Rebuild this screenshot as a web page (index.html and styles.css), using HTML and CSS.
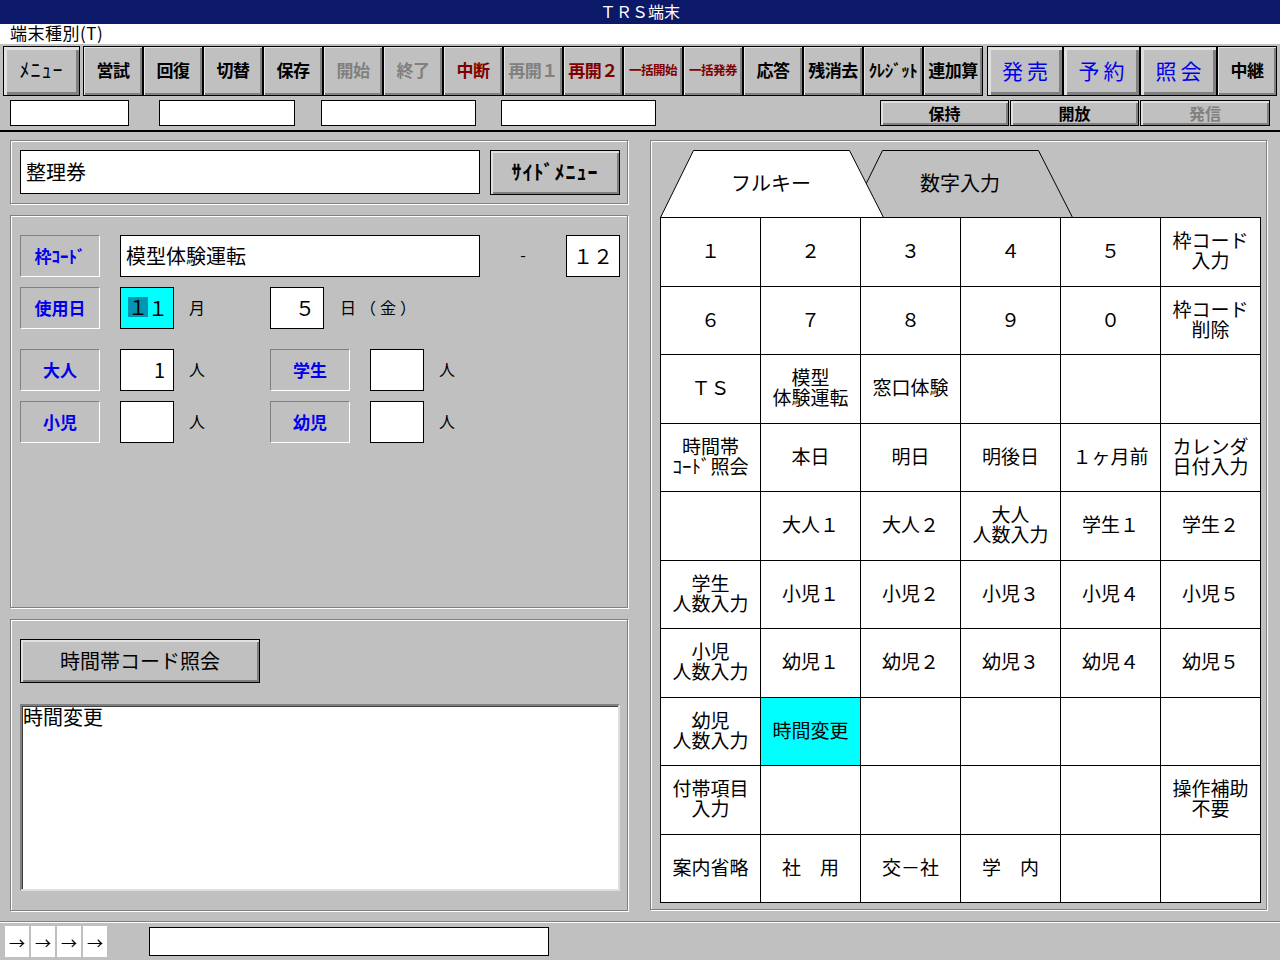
FILE: index.html
```html
<!DOCTYPE html>
<html lang="ja">
<head>
<meta charset="utf-8">
<title>ＴＲＳ端末</title>
<link rel="stylesheet" href="styles.css">
</head>
<body>
<div class="app">
  <div class="titlebar">ＴＲＳ端末</div>
  <div class="menubar"><span class="menu-item">端末種別(T)</span></div>

  <div class="toolbar">
    <div class="btn-row">
      <button class="tb big w-menu">ﾒﾆｭｰ</button>
      <button class="tb first">営試</button>
      <button class="tb">回復</button>
      <button class="tb">切替</button>
      <button class="tb">保存</button>
      <button class="tb gray">開始</button>
      <button class="tb gray">終了</button>
      <button class="tb red">中断</button>
      <button class="tb gray">再開１</button>
      <button class="tb red">再開２</button>
      <button class="tb red small">一括開始</button>
      <button class="tb red small">一括発券</button>
      <button class="tb">応答</button>
      <button class="tb">残消去</button>
      <button class="tb">ｸﾚｼﾞｯﾄ</button>
      <button class="tb">連加算</button>
      <button class="tb big blue w-hatsu">発売</button>
      <button class="tb big blue w-77">予約</button>
      <button class="tb big blue w-77">照会</button>
      <button class="tb">中継</button>
    </div>
    <div class="field-row">
      <div class="box f1"></div>
      <div class="box f2"></div>
      <div class="box f3"></div>
      <div class="box f4"></div>
      <button class="sb push">保持</button>
      <button class="sb">開放</button>
      <button class="sb gray wide">発信</button>
    </div>
  </div>
  <div class="divider"></div>

  <div class="main">
    <div class="left">
      <div class="panel p1">
        <div class="input ticket">整理券</div>
        <button class="bb side">ｻｲﾄﾞﾒﾆｭｰ</button>
      </div>

      <div class="panel p2">
        <div class="frow">
          <div class="lbl">枠ｺｰﾄﾞ</div>
          <div class="input name">模型体験運転</div>
          <div class="dash">-</div>
          <div class="input sq center">１２</div>
        </div>
        <div class="frow">
          <div class="lbl">使用日</div>
          <div class="input sq cyan"><span class="sel">１</span>１</div>
          <div class="unit">月</div>
          <div class="input sq right">５</div>
          <div class="unit date">日（金）</div>
        </div>
        <div class="frow gap-top">
          <div class="lbl">大人</div>
          <div class="input sq right">1</div>
          <div class="unit">人</div>
          <div class="lbl">学生</div>
          <div class="input sq"></div>
          <div class="unit">人</div>
        </div>
        <div class="frow">
          <div class="lbl">小児</div>
          <div class="input sq"></div>
          <div class="unit">人</div>
          <div class="lbl">幼児</div>
          <div class="input sq"></div>
          <div class="unit">人</div>
        </div>
      </div>

      <div class="panel p3">
        <button class="bb query">時間帯コード照会</button>
        <div class="memo">時間変更</div>
      </div>
    </div>

    <div class="panel right">
      <div class="tabs">
        <svg width="600" height="67" viewBox="0 0 600 67">
          <polygon points="189.5,67.5 222.5,0.5 378.5,0.5 412.5,67.5" fill="#c0c0c0" stroke="#000" stroke-width="1"/>
          <polygon points="0.5,67.5 33.5,0.5 189.5,0.5 223.5,67.5" fill="#fff" stroke="#000" stroke-width="1"/>
          <text x="111" y="32" class="tab-text">フルキー</text>
          <text x="300" y="32" class="tab-text">数字入力</text>
        </svg>
      </div>
      <div class="keys">
        <div class="key">１</div>
        <div class="key">２</div>
        <div class="key">３</div>
        <div class="key">４</div>
        <div class="key">５</div>
        <div class="key"><span class="l">枠コード</span><span class="l">入力</span></div>

        <div class="key">６</div>
        <div class="key">７</div>
        <div class="key">８</div>
        <div class="key">９</div>
        <div class="key">０</div>
        <div class="key"><span class="l">枠コード</span><span class="l">削除</span></div>

        <div class="key">ＴＳ</div>
        <div class="key"><span class="l">模型</span><span class="l">体験運転</span></div>
        <div class="key">窓口体験</div>
        <div class="key"></div>
        <div class="key"></div>
        <div class="key"></div>

        <div class="key"><span class="l">時間帯</span><span class="l">ｺｰﾄﾞ照会</span></div>
        <div class="key">本日</div>
        <div class="key">明日</div>
        <div class="key">明後日</div>
        <div class="key">１ヶ月前</div>
        <div class="key"><span class="l">カレンダ</span><span class="l">日付入力</span></div>

        <div class="key"></div>
        <div class="key">大人１</div>
        <div class="key">大人２</div>
        <div class="key"><span class="l">大人</span><span class="l">人数入力</span></div>
        <div class="key">学生１</div>
        <div class="key">学生２</div>

        <div class="key"><span class="l">学生</span><span class="l">人数入力</span></div>
        <div class="key">小児１</div>
        <div class="key">小児２</div>
        <div class="key">小児３</div>
        <div class="key">小児４</div>
        <div class="key">小児５</div>

        <div class="key"><span class="l">小児</span><span class="l">人数入力</span></div>
        <div class="key">幼児１</div>
        <div class="key">幼児２</div>
        <div class="key">幼児３</div>
        <div class="key">幼児４</div>
        <div class="key">幼児５</div>

        <div class="key"><span class="l">幼児</span><span class="l">人数入力</span></div>
        <div class="key active">時間変更</div>
        <div class="key"></div>
        <div class="key"></div>
        <div class="key"></div>
        <div class="key"></div>

        <div class="key"><span class="l">付帯項目</span><span class="l">入力</span></div>
        <div class="key"></div>
        <div class="key"></div>
        <div class="key"></div>
        <div class="key"></div>
        <div class="key"><span class="l">操作補助</span><span class="l">不要</span></div>

        <div class="key">案内省略</div>
        <div class="key">社　用</div>
        <div class="key">交－社</div>
        <div class="key">学　内</div>
        <div class="key"></div>
        <div class="key"></div>
      </div>
    </div>
  </div>

  <div class="status">
    <div class="arrow">→</div>
    <div class="arrow">→</div>
    <div class="arrow">→</div>
    <div class="arrow">→</div>
    <div class="box status-input"></div>
  </div>
</div>
</body>
</html>
```

FILE: styles.css
```css
* { box-sizing: border-box; }

html, body {
  margin: 0;
  padding: 0;
}

body {
  width: 1280px;
  height: 960px;
  overflow: hidden;
  background: #c0c0c0;
  font-family: "Noto Sans CJK JP", "Noto Sans CJK SC", sans-serif;
  color: #000;
}

button {
  font-family: inherit;
  margin: 0;
  padding: 0;
  cursor: default;
}

.app {
  display: flex;
  flex-direction: column;
  height: 960px;
}

/* title + menu */
.titlebar {
  height: 24px;
  background: #0c1968;
  color: #fff;
  font-size: 16px;
  line-height: 22px;
  text-align: center;
}

.menubar {
  height: 20px;
  background: #fff;
  font-size: 17px;
  line-height: 18px;
  padding-left: 10px;
  letter-spacing: 0.5px;
}

/* toolbar */
.toolbar {
  padding-top: 2px;
  height: 86px;
}

.btn-row {
  display: flex;
  height: 50px;
  padding-left: 3px;
}

.tb {
  width: 60px;
  height: 50px;
  border: 1px solid #000;
  background: #c0c0c0;
  box-shadow: inset 1px 1px 0 #e6e6e6, inset -2px -2px 0 #808080;
  font-size: 17px;
  font-weight: bold;
  color: #000;
  display: flex;
  align-items: center;
  justify-content: center;
  white-space: nowrap;
  letter-spacing: -0.5px;
  padding-bottom: 3px;
}

.tb.first { margin-left: 3px; }
.tb.gray { color: #808080; }
.tb.red { color: #800000; }
.tb.small { font-size: 12.5px; letter-spacing: -0.5px; }

.tb.big {
  box-shadow: inset 3px 3px 0 #e0e0e0, inset -3px -3px 0 #808080;
}

.tb.w-menu {
  width: 77px;
  font-weight: normal;
  font-size: 20px;
  letter-spacing: 1px;
}

.tb.blue {
  color: #0000e8;
  font-weight: normal;
  font-size: 21px;
  letter-spacing: 4px;
  padding-left: 4px;
}

.tb.w-hatsu { width: 76px; margin-left: 4px; }
.tb.w-77 { width: 77px; }

.field-row {
  display: flex;
  height: 26px;
  margin-top: 4px;
  padding-left: 10px;
  padding-right: 10px;
}

.box {
  background: #fff;
  border: 1px solid #000;
  height: 26px;
}

.f1 { width: 119px; }
.f2 { width: 136px; margin-left: 30px; }
.f3 { width: 155px; margin-left: 26px; }
.f4 { width: 155px; margin-left: 25px; }

.sb {
  width: 129px;
  height: 26px;
  margin-left: 1px;
  border: 1px solid #000;
  background: #c0c0c0;
  box-shadow: inset 2px 2px 0 #e0e0e0, inset -2px -2px 0 #808080;
  font-size: 16px;
  font-weight: bold;
  line-height: 20px;
  color: #000;
}

.sb.push { margin-left: auto; }
.sb.gray { color: #808080; }
.sb.wide { width: 130px; }

.divider {
  height: 2px;
  background: #000;
}

/* main */
.main {
  display: flex;
  align-items: flex-start;
  padding: 8px 0 0 10px;
  height: 789px;
}

.panel {
  border: 1px solid #808080;
  box-shadow: inset 1px 1px 0 #fff, 1px 1px 0 #fff;
}

.left {
  width: 618px;
  display: flex;
  flex-direction: column;
  gap: 11px;
}

.p1 {
  height: 64px;
  display: flex;
  align-items: flex-start;
  padding: 9px 0 0 9px;
}

.input {
  background: #fff;
  border: 1px solid #000;
  font-size: 20px;
  display: flex;
  align-items: center;
  padding-left: 5px;
  padding-bottom: 2px;
  white-space: nowrap;
}

.ticket {
  width: 460px;
  height: 44px;
}

.bb {
  border: 1px solid #000;
  background: #c0c0c0;
  box-shadow: inset 2px 2px 0 #e0e0e0, inset -2px -2px 0 #808080;
  color: #000;
  display: flex;
  align-items: center;
  justify-content: center;
  padding-bottom: 2px;
}

.side {
  width: 130px;
  height: 45px;
  margin-left: 10px;
  font-size: 20px;
  font-weight: bold;
  letter-spacing: 1px;
}

.p2 {
  height: 393px;
  padding: 19px 0 0 9px;
  display: flex;
  flex-direction: column;
}

.frow {
  display: flex;
  align-items: center;
  height: 42px;
  margin-bottom: 10px;
}

.frow.gap-top { margin-top: 10px; }

.lbl {
  width: 80px;
  height: 42px;
  margin-right: 20px;
  border: 1px solid;
  border-color: #808080 #fff #fff #808080;
  color: #0000ee;
  font-size: 17px;
  font-weight: bold;
  display: flex;
  align-items: center;
  justify-content: center;
  padding-bottom: 2px;
}

.input.name {
  width: 360px;
  height: 42px;
}

.dash {
  width: 86px;
  text-align: center;
  font-size: 16px;
  color: #000;
  padding-bottom: 4px;
}

.input.sq {
  width: 54px;
  height: 42px;
}

.input.center {
  justify-content: center;
  padding-left: 0;
}

.input.right {
  justify-content: flex-end;
  padding-left: 0;
  padding-right: 8px;
}

.input.cyan {
  background: #00ffff;
  padding-left: 7px;
}

.sel {
  background: #0096b4;
  display: inline-block;
  height: 20px;
  line-height: 20px;
}

.unit {
  width: 96px;
  padding-left: 15px;
  font-size: 16px;
  padding-bottom: 3px;
}

.unit.date {
  width: auto;
  padding-left: 16px;
  letter-spacing: 4px;
}

.p3 {
  height: 292px;
  padding: 19px 0 0 9px;
}

.query {
  width: 240px;
  height: 44px;
  font-size: 20px;
}

.memo {
  width: 600px;
  height: 187px;
  margin-top: 21px;
  background: #fff;
  border: 2px solid;
  border-color: #808080 #dfdfdf #dfdfdf #808080;
  box-shadow: inset 1px 1px 0 #404040;
  font-size: 20px;
  line-height: 22px;
  padding-left: 1px;
}

/* right panel */
.panel.right {
  width: 617px;
  height: 770px;
  margin-left: 22px;
  padding: 9px 6px 0 9px;
}

.tabs {
  height: 67px;
}

.tabs svg { display: block; }

.tab-text {
  font-family: "Noto Sans CJK JP", "Noto Sans CJK SC", sans-serif;
  font-size: 20px;
  text-anchor: middle;
  dominant-baseline: central;
  fill: #000;
}

.keys {
  display: grid;
  grid-template-columns: repeat(6, 100px);
  grid-template-rows: repeat(10, 1fr);
  width: 601px;
  height: 686px;
  border-top: 1px solid #000;
  border-left: 1px solid #000;
  background: #fff;
}

.key {
  border-right: 1px solid #000;
  border-bottom: 1px solid #000;
  display: flex;
  flex-direction: column;
  align-items: center;
  justify-content: center;
  text-align: center;
  font-size: 19px;
  line-height: 20px;
  white-space: nowrap;
  padding-bottom: 3px;
}

.key .l {
  display: block;
  height: 20px;
  line-height: 20px;
}

.key.active { background: #00ffff; }

/* status */
.status {
  border-top: 1px solid #808080;
  box-shadow: inset 0 1px 0 #fff;
  display: flex;
  align-items: flex-start;
  padding: 4px 0 0 5px;
  flex: 1;
}

.arrow {
  width: 24px;
  height: 31px;
  margin-right: 2px;
  background: #fff;
  font-size: 16px;
  display: flex;
  align-items: center;
  justify-content: center;
}

.status-input {
  width: 400px;
  height: 29px;
  margin-left: 40px;
  margin-top: 1px;
}
```
